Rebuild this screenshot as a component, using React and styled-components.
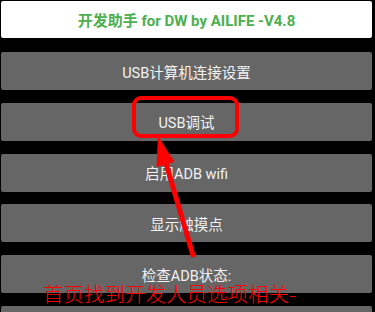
import styled, { createGlobalStyle } from "styled-components";

const GlobalStyle = createGlobalStyle`
  html, body {
    margin: 0;
    padding: 0;
    background: #000;
  }
  body {
    font-family: Roboto, "Noto Sans CJK SC", sans-serif;
    overflow: hidden;
  }
`;

const items = [
  "USB计算机连接设置",
  "USB调试",
  "启用ADB wifi",
  "显示触摸点",
  "检查ADB状态:",
  "开发人员选项",
];

export default function App() {
  return (
    <>
      <GlobalStyle />
      <Screen>
        <Header>开发助手 for DW by AILIFE -V4.8</Header>
        <List>
          {items.map((label) => (
            <Item key={label}>{label}</Item>
          ))}
        </List>

        <Marks width="375" height="312" viewBox="0 0 375 312">
          <rect x="134" y="98" width="103" height="38" rx="7" fill="none" stroke="#ff0000" strokeWidth="4" />
          <line x1="165" y1="160" x2="193.5" y2="257" stroke="#ff0000" strokeWidth="5" />
          <polygon points="158,136 174.5,162 156.5,167" fill="#ff0000" />
        </Marks>
        <Note>首页找到开发人员选项相关-</Note>
      </Screen>
    </>
  );
}

const Screen = styled.div`
  position: relative;
  width: 375px;
  height: 312px;
  overflow: hidden;
  padding: 1px 3px 0 1px;
  box-sizing: border-box;
`;

const Header = styled.div`
  height: 37px;
  background: #fff;
  border-radius: 2px;
  display: flex;
  align-items: center;
  justify-content: center;
  color: #4caf50;
  font-weight: bold;
  font-size: 15px;
`;

const List = styled.div`
  display: flex;
  flex-direction: column;
  gap: 12.8px;
  margin-top: 14px;
`;

const Item = styled.div`
  height: 38px;
  background: #666666;
  border-radius: 2px;
  display: flex;
  align-items: center;
  justify-content: center;
  color: #f2f2f2;
  font-size: 14.5px;
`;

const Marks = styled.svg`
  position: absolute;
  left: 0;
  top: 0;
  pointer-events: none;
`;

const Note = styled.div`
  position: absolute;
  left: 43px;
  top: 280px;
  color: #ff0000;
  font-size: 20.5px;
  line-height: 26px;
  font-family: "Noto Sans CJK SC", sans-serif;
  font-weight: 300;
  white-space: nowrap;
`;
